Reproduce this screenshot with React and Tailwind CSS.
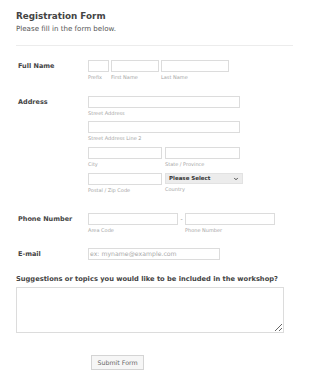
import { ChevronDown } from "lucide-react"

const inputCls = "block h-[12px] border border-[#dcdcdc] bg-white"

function Field({ width, label }) {
  return (
    <div className="flex flex-col">
      <div className={inputCls} style={{ width }} />
      <span className="mt-[2px] text-[5px] leading-[7px] text-[#a5a5a5]">{label}</span>
    </div>
  )
}

function Row({ label, children, className = "" }) {
  return (
    <div className={`flex ${className}`}>
      <div className="w-[72px] shrink-0 pl-[2px] text-[6.5px] font-bold leading-[12px] text-[#444]">{label}</div>
      <div className="flex flex-col">{children}</div>
    </div>
  )
}

export default function App() {
  return (
    <div className="w-[310px] h-[381px] bg-white px-4 pt-[10px] font-['DejaVu_Sans',Verdana,sans-serif] text-[#444]">
      <h1 className="text-[8.8px] font-bold leading-[12px] text-[#444]">Registration Form</h1>
      <p className="mt-[2px] text-[7.1px] leading-[10px] text-[#555]">Please fill in the form below.</p>
      <div className="mt-[11px] mr-[1px] border-t border-[#ececec]" />

      <Row label="Full Name" className="mt-[14px]">
        <div className="flex gap-[2px]">
          <Field width="21px" label="Prefix" />
          <Field width="48px" label="First Name" />
          <Field width="68px" label="Last Name" />
        </div>
      </Row>

      <Row label="Address" className="mt-[15px]">
        <Field width="152px" label="Street Address" />
        <div className="mt-[4px]">
          <Field width="152px" label="Street Address Line 2" />
        </div>
        <div className="mt-[5px] flex gap-[3px]">
          <Field width="74px" label="City" />
          <Field width="75px" label="State / Province" />
        </div>
        <div className="mt-[5px] flex gap-[3px]">
          <Field width="74px" label="Postal / Zip Code" />
          <div className="flex flex-col">
            <div className="flex h-[11px] w-[78px] items-center justify-between border border-[#e2e2e2] bg-[#ececec] pl-[3px] pr-[3px] text-[5.5px] font-semibold text-[#333]">
              <span>Please Select</span>
              <ChevronDown className="h-[6px] w-[6px] text-[#333]" strokeWidth={3.5} />
            </div>
            <span className="mt-[2px] text-[5px] leading-[7px] text-[#a5a5a5]">Country</span>
          </div>
        </div>
      </Row>

      <Row label="Phone Number" className="mt-[19px]">
        <div className="flex">
          <Field width="90px" label="Area Code" />
          <span className="w-[7px] text-center text-[6px] leading-[12px] text-[#888]">-</span>
          <Field width="90px" label="Phone Number" />
        </div>
      </Row>

      <Row label="E-mail" className="mt-[14px]">
        <div className="flex h-[12px] w-[132px] items-center border border-[#dcdcdc] bg-white pl-[1px] text-[6.2px] text-[#aaa]">
          ex: myname@example.com
        </div>
      </Row>

      <div className="mt-[14px] text-[6.7px] font-bold leading-[10px] text-[#444]">
        Suggestions or topics you would like to be included in the workshop?
      </div>
      <textarea className="mt-[3px] block h-[46px] w-[268px] border border-[#dcdcdc] bg-white" />

      <div className="mt-[22px] flex pl-[75px]">
        <button className="block h-[15px] w-[53px] border border-[#d4d4d4] bg-[#f6f6f6] text-[6.3px] leading-[13px] text-[#666]">
          Submit Form
        </button>
      </div>
    </div>
  )
}
